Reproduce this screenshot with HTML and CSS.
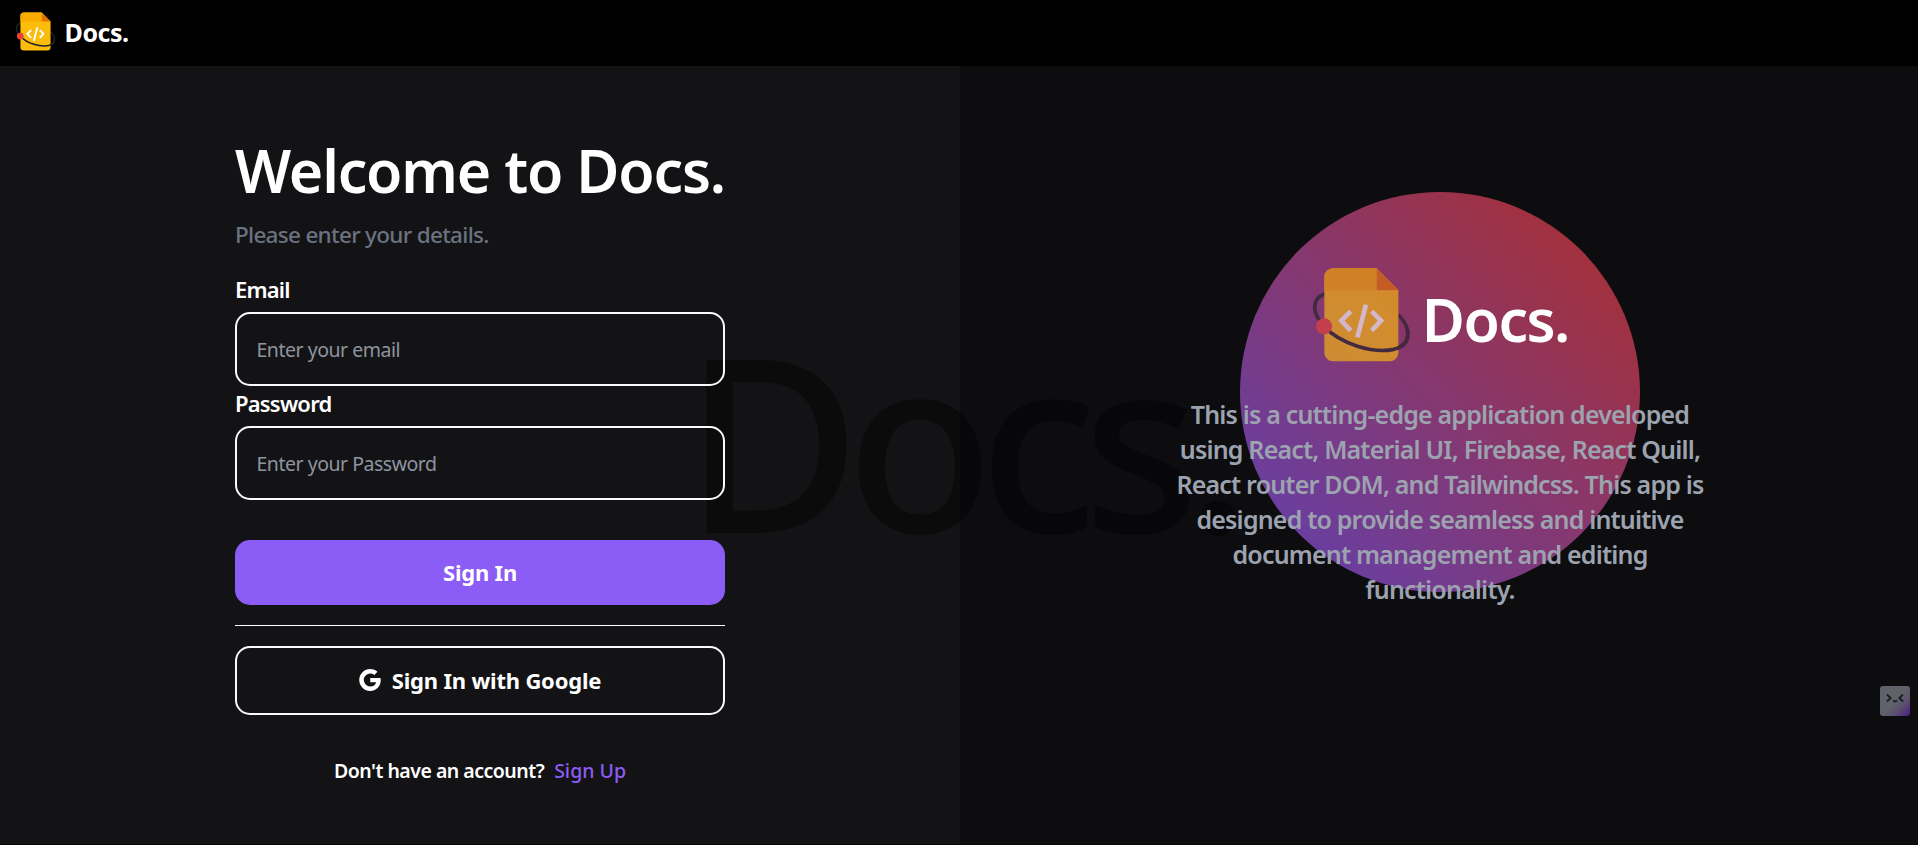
FILE: index.html
```html
<!DOCTYPE html>
<html lang="en">
<head>
<meta charset="utf-8">
<title>Docs.</title>
<link rel="stylesheet" href="styles.css">
</head>
<body>
<svg width="0" height="0" class="defs" aria-hidden="true">
  <symbol id="logo" viewBox="62 80 302 290">
    <path d="M324 223C360 260 370 312 310 327" fill="none" stroke="#202124" stroke-width="11"/>
    <path d="M103 161C65 175 62 215 101 258" fill="none" stroke="#202124" stroke-width="11"/>
    <path d="M128 84H259L324 149V337A26 26 0 0 1 298 363H128A26 26 0 0 1 102 337V110A26 26 0 0 1 128 84Z" fill="#fbbc0b"/>
    <path d="M128 84H259V150H102V110A26 26 0 0 1 128 84Z" fill="#f9ab00"/>
    <path d="M259 84L324 150H259Z" fill="#e37400"/>
    <path d="M181 213L153 241L181 271M244 213L272 241L244 271M227 193L201 291" fill="none" stroke="#fff" stroke-width="14"/>
    <path d="M101 258C150 312 250 340 310 327C344 318 356 296 351 268" fill="none" stroke="#202124" stroke-width="11"/>
    <circle cx="101" cy="258" r="24.5" fill="#ea4335"/>
  </symbol>
</svg>

<header class="topbar">
  <svg class="topbar-logo"><use href="#logo"/></svg>
  <span class="topbar-name">Docs.</span>
</header>

<main class="panels">
  <span class="watermark" aria-hidden="true">Docs.</span>

  <section class="panel signin">
    <form class="form">
      <h1 class="title">Welcome to Docs.</h1>
      <p class="subtitle">Please enter your details.</p>
      <label class="label" for="email">Email</label>
      <input class="input" id="email" type="email" placeholder="Enter your email">
      <label class="label label-password" for="password">Password</label>
      <input class="input input-password" id="password" type="password" placeholder="Enter your Password">
      <button class="btn btn-primary" type="button">Sign In</button>
      <div class="divider"></div>
      <button class="btn btn-google" type="button">
        <svg class="google" viewBox="3.02 3.04 17.47 17.88"><path fill="currentColor" d="M20.283 10.356h-8.327v3.451h4.792c-.446 2.193-2.313 3.453-4.792 3.453a5.27 5.27 0 0 1-5.279-5.28 5.27 5.27 0 0 1 5.279-5.279c1.259 0 2.397.447 3.29 1.178l2.6-2.599c-1.584-1.381-3.615-2.233-5.89-2.233a8.908 8.908 0 0 0-8.934 8.934 8.907 8.907 0 0 0 8.934 8.934c4.467 0 8.529-3.249 8.529-8.934 0-.528-.081-1.097-.202-1.625z"/></svg>
        <span>Sign In with Google</span>
      </button>
      <p class="signup"><span>Don't have an account?</span><a class="signup-link">Sign Up</a></p>
    </form>
  </section>

  <section class="panel about">
    <div class="orb"></div>
    <div class="brand">
      <svg class="brand-logo"><use href="#logo"/></svg>
      <span class="brand-name">Docs.</span>
    </div>
    <p class="blurb">This is a cutting-edge application developed<br>using React, Material UI, Firebase, React Quill,<br>React router DOM, and Tailwindcss. This app is<br>designed to provide seamless and intuitive<br>document management and editing<br>functionality.</p>
  </section>
</main>

<svg class="helper" viewBox="0 0 30 30">
  <defs><linearGradient id="helperFill" x1="0" y1="0" x2="1" y2="1"><stop offset="0.5" stop-color="#5f6268"/><stop offset="0.72" stop-color="#5c4f70"/><stop offset="1" stop-color="#481a80"/></linearGradient></defs>
  <rect width="30" height="30" rx="3" fill="url(#helperFill)"/>
  <path d="M7 8.5L10.6 12L7 15.5M23 8.5L19.4 12L23 15.5M13 14.4Q15 16.6 17 14.4" fill="none" stroke="#1c1e24" stroke-width="1.9"/>
</svg>
</body>
</html>
```
FILE: styles.css
```css
* { box-sizing: border-box; margin: 0; padding: 0; }

body {
  width: 1918px;
  height: 845px;
  overflow: hidden;
  display: flex;
  flex-direction: column;
  background: #0b0708;
  color: #fff;
  font-family: "Noto Sans", "Open Sans", sans-serif;
}

.defs { position: absolute; }

.topbar {
  flex: none;
  height: 66px;
  display: flex;
  align-items: center;
  gap: 9px;
  padding: 0 14.6px 2px;
  background: #000;
}
.topbar-logo { width: 41px; height: 39.4px; margin-bottom: 1px; }
.topbar-name { font-size: 25px; font-weight: 700; letter-spacing: -0.5px; line-height: 34px; }

.panels {
  position: relative;
  height: 778px;
  display: grid;
  grid-template-columns: 960px 960px;
}
.panel { display: flex; flex-direction: column; align-items: center; }
.signin { background: #131315; }
.about { position: relative; background: #0d0d0f; }

.watermark {
  position: absolute;
  z-index: 1;
  left: 684px;
  top: 252px;
  font-size: 242px;
  line-height: 242px;
  font-weight: 500;
  letter-spacing: -15px;
  color: rgba(0, 0, 0, 0.4);
  pointer-events: none;
}

.form {
  position: relative;
  z-index: 2;
  width: 490px;
  padding-top: 73px;
  display: flex;
  flex-direction: column;
}
.title {
  font-size: 59px;
  line-height: 62px;
  font-weight: 600;
  letter-spacing: -1.2px;
  white-space: nowrap;
}
.subtitle {
  margin-top: 17px;
  font-size: 22.5px;
  line-height: 34px;
  font-weight: 500;
  letter-spacing: -0.7px;
  color: #6b7280;
}
.label {
  margin: 22px 0 8px;
  font-size: 22px;
  line-height: 30px;
  font-weight: 600;
  letter-spacing: -0.8px;
}
.label-password { margin-top: 2px; }
.input {
  height: 74px;
  padding: 1px 19.5px 0;
  border: 2px solid #f9fafb;
  border-radius: 15px;
  background: transparent;
  color: #fff;
  font: 400 19.5px "Noto Sans", sans-serif;
  letter-spacing: -0.48px;
}
.input::placeholder { color: #9ca3af; opacity: 0.9; }
.btn {
  display: flex;
  align-items: center;
  justify-content: center;
  border: 0;
  border-radius: 15px;
  color: #fff;
  font: 700 22px/30px "Noto Sans", sans-serif;
  letter-spacing: -0.2px;
}
.btn-primary { height: 65px; margin-top: 40px; padding-bottom: 2px; background: #8b5cf6; }
.divider { height: 1px; margin: 20px 0; background: #fff; }
.btn-google {
  height: 69px;
  gap: 11px;
  padding-bottom: 2px;
  border: 2px solid #f9fafb;
  background: transparent;
}
.google { width: 22px; height: 22px; }
.signup {
  margin-top: 42px;
  display: flex;
  justify-content: center;
  gap: 10px;
  font-size: 19.5px;
  line-height: 28px;
  font-weight: 600;
  letter-spacing: -0.5px;
}
.signup-link { color: #8b5cf6; font-weight: 500; letter-spacing: 0; }

.orb {
  position: absolute;
  z-index: 1;
  left: 280px;
  top: 126px;
  width: 400px;
  height: 400px;
  border-radius: 50%;
  background: linear-gradient(45deg, #5f41b3, #ad2e2a);
}
.brand {
  position: relative;
  z-index: 2;
  margin-top: 200.7px;
  height: 97px;
  display: flex;
  align-items: center;
  gap: 10px;
}
.brand-logo { width: 100.7px; height: 96.7px; opacity: 0.64; }
.brand-name {
  padding-top: 8px;
  font-size: 59px;
  line-height: 60px;
  font-weight: 600;
  letter-spacing: -1.5px;
}
.blurb {
  position: relative;
  z-index: 2;
  margin-top: 33px;
  text-align: center;
  font-size: 25px;
  line-height: 35px;
  font-weight: 600;
  letter-spacing: -0.82px;
  white-space: nowrap;
  color: #9ca3af;
}

.helper {
  position: absolute;
  left: 1880px;
  top: 686px;
  width: 30px;
  height: 30px;
}
```
